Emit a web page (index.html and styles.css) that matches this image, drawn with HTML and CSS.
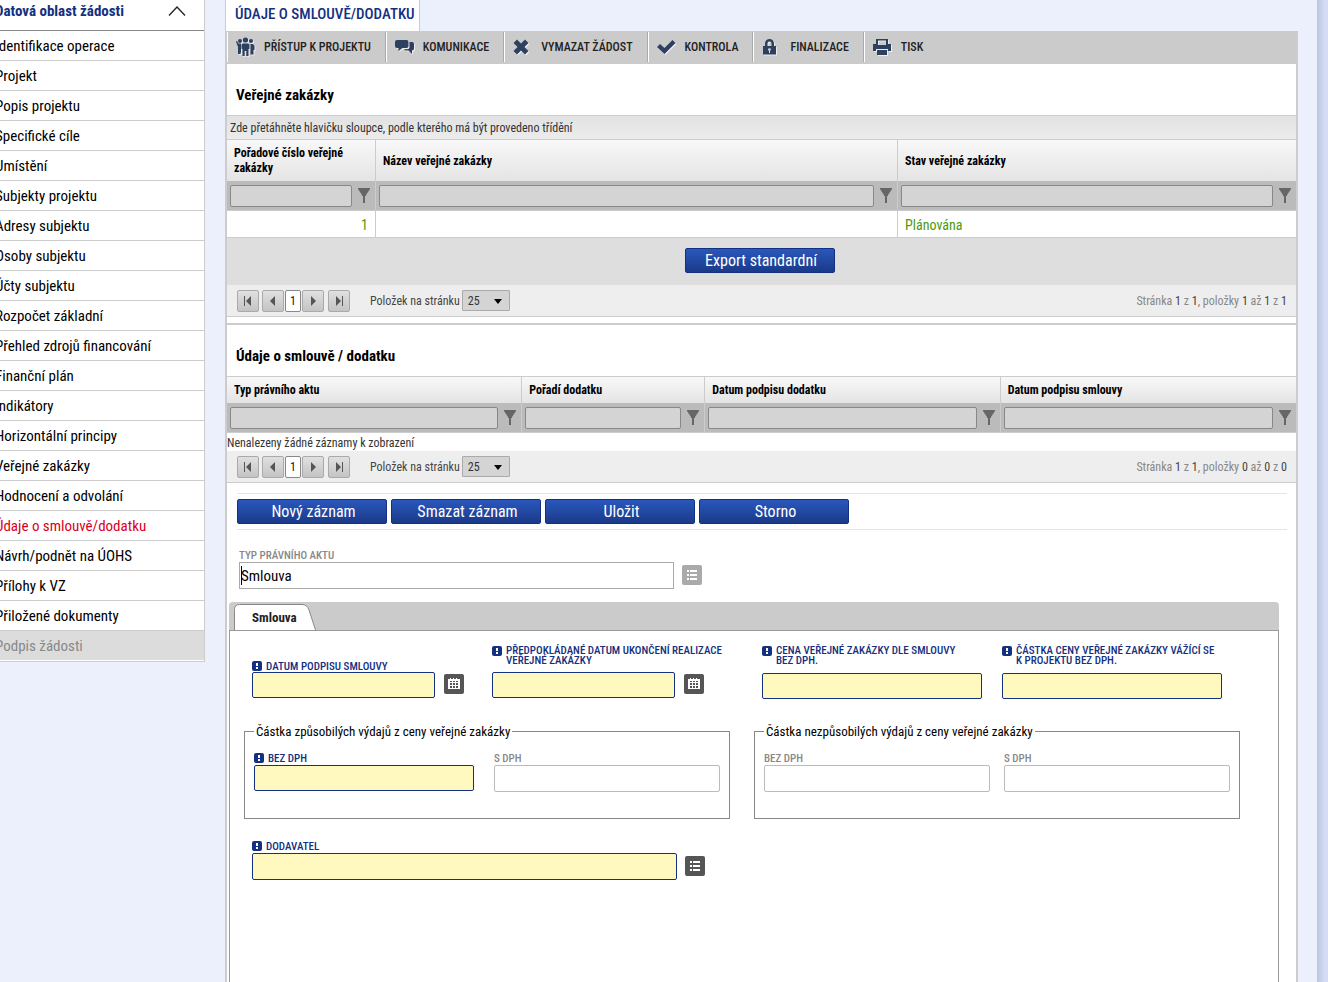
FILE: index.html
```html
<!DOCTYPE html>
<html lang="cs">
<head>
<meta charset="utf-8">
<title>Údaje o smlouvě/dodatku</title>
<link rel="stylesheet" href="styles.css">
</head>
<body>
<svg class="defs" aria-hidden="true">
  <symbol id="funnel" viewBox="0 0 12 15"><path d="M0 0h12v1L8 7v1H7v7H5V8H4V7L0 1z"/></symbol>
  <symbol id="req" viewBox="0 0 10 10"><rect width="10" height="10" rx="2" fill="#143080"/><path d="M4 2h2v3H4zM4 6h2v2H4z" fill="#fff"/></symbol>
  <symbol id="list" viewBox="0 0 20 20"><path d="M5 5h2v2H5zM8 5h7v2H8zM5 9h2v2H5zM8 9h7v2H8zM5 13h2v2H5zM8 13h7v2H8z"/></symbol>
  <symbol id="cal" viewBox="0 0 20 20"><path fill-rule="evenodd" d="M4 5h2V4h1v1h2V4h1v1h2V4h1v1h3v10H4zM6 7v1h2V7zM9 7v1h2V7zM12 7v1h2V7zM6 9v2h2V9zM9 9v2h2V9zM12 9v2h2V9zM6 12v2h2v-2zM9 12v2h2v-2zM12 12v2h2v-2z"/></symbol>
  <symbol id="first" viewBox="0 0 8 10"><path d="M0 0h1v10H0zM7 0v10L2 5z"/></symbol>
  <symbol id="prev" viewBox="0 0 8 10"><path d="M6 0v10L1 5z"/></symbol>
  <symbol id="next" viewBox="0 0 8 10"><path d="M2 0v10l5-5z"/></symbol>
  <symbol id="last" viewBox="0 0 8 10"><path d="M7 0h1v10H7zM1 0v10l5-5z"/></symbol>
</svg>
<div class="page">
  <nav class="side">
    <button class="side-head" type="button">Datová oblast žádosti
      <svg width="18" height="10" viewBox="0 0 18 10"><path d="M1 9.500L9 1l8 8.500" fill="none" stroke="#222" stroke-width="1.300"/></svg>
    </button>
    <ul class="menu">
      <li><a href="#">Identifikace operace</a></li>
      <li><a href="#">Projekt</a></li>
      <li><a href="#">Popis projektu</a></li>
      <li><a href="#">Specifické cíle</a></li>
      <li><a href="#">Umístění</a></li>
      <li><a href="#">Subjekty projektu</a></li>
      <li><a href="#">Adresy subjektu</a></li>
      <li><a href="#">Osoby subjektu</a></li>
      <li><a href="#">Účty subjektu</a></li>
      <li><a href="#">Rozpočet základní</a></li>
      <li><a href="#">Přehled zdrojů financování</a></li>
      <li><a href="#">Finanční plán</a></li>
      <li><a href="#">Indikátory</a></li>
      <li><a href="#">Horizontální principy</a></li>
      <li><a href="#">Veřejné zakázky</a></li>
      <li><a href="#">Hodnocení a odvolání</a></li>
      <li><a href="#" class="active">Údaje o smlouvě/dodatku</a></li>
      <li><a href="#">Návrh/podnět na ÚOHS</a></li>
      <li><a href="#">Přílohy k VZ</a></li>
      <li><a href="#">Přiložené dokumenty</a></li>
      <li><a href="#" class="disabled">Podpis žádosti</a></li>
    </ul>
  </nav>

  <main class="main">
    <div class="title-row"><h1 class="title-tab">ÚDAJE O SMLOUVĚ/DODATKU</h1></div>
    <div class="content">
      <div class="toolbar">
        <button type="button" class="tool"><svg class="tool-icon" width="20" height="20" viewBox="0 0 20 20"><circle cx="9.500" cy="3" r="2.600"/><circle cx="4" cy="4" r="2"/><circle cx="15" cy="4" r="2"/><path d="M7 6.500h5l1.500 1V12h-1v7h-2.200v-5H8.700v5H6.500v-7H5.500V7.500zM0 4.500l1-.5 1.500 2.500H5V15l-.5 2H2V10zM14.500 7H17l1.500 2v4h-1v4.500h-3z"/></svg>PŘÍSTUP K PROJEKTU</button>
        <button type="button" class="tool"><svg class="tool-icon" width="20" height="20" viewBox="0 0 20 20"><path d="M2 3h9.500A2 2 0 0 1 13.500 5v4a2 2 0 0 1-2 2H7.500l-4 3v-3H2A2 2 0 0 1 0 9V5A2 2 0 0 1 2 3zM14.500 5H17a2 2 0 0 1 2 2v4.500a2 2 0 0 1-2 2V17l-3.500-3.500h-3L9 12.200h3.500a2 2 0 0 0 2-2z"/></svg>KOMUNIKACE</button>
        <button type="button" class="tool"><svg class="tool-icon" width="20" height="20" viewBox="0 0 20 20"><path d="M4 2.500L8 6.500l4-4L15.500 6l-4 4 4 4-3.500 3.500-4-4-4 4L.5 14l4-4-4-4z"/></svg>VYMAZAT ŽÁDOST</button>
        <button type="button" class="tool"><svg class="tool-icon" width="20" height="20" viewBox="0 0 20 20"><path d="M0 10l3-3 4.500 4L15.500 3l3 3L7.500 17z"/></svg>KONTROLA</button>
        <button type="button" class="tool"><svg class="tool-icon" width="20" height="20" viewBox="0 0 20 20"><path fill-rule="evenodd" d="M3 9V6.500a4.500 4.500 0 0 1 9 0V9h2v8.500H1V9zM5.500 9h4V6.500a2 2 0 0 0-4 0zM6.200 11.500v2H7V16h1v-2.500h.8v-2z"/></svg>FINALIZACE</button>
        <button type="button" class="tool"><svg class="tool-icon" width="20" height="20" viewBox="0 0 20 20"><path fill-rule="evenodd" d="M3 2h12v5h3v7h-3v-2H3v2H0V7h3zM5 3.500V8h8V3.500zM4 13h10v5H4z"/></svg>TISK</button>
      </div>

      <section class="block">
        <h2>Veřejné zakázky</h2>
        <p class="group-bar">Zde přetáhněte hlavičku sloupce, podle kterého má být provedeno třídění</p>
        <table class="grid">
          <colgroup><col class="c-num"><col><col class="c-state"></colgroup>
          <thead>
            <tr class="tall"><th>Pořadové číslo veřejné zakázky</th><th>Název veřejné zakázky</th><th>Stav veřejné zakázky</th></tr>
            <tr class="filters">
              <td><div class="filter"><input type="text" aria-label="Pořadové číslo veřejné zakázky"><button type="button" aria-label="Filtr"><svg width="12" height="15"><use href="#funnel"/></svg></button></div></td>
              <td><div class="filter"><input type="text" aria-label="Název veřejné zakázky"><button type="button" aria-label="Filtr"><svg width="12" height="15"><use href="#funnel"/></svg></button></div></td>
              <td><div class="filter"><input type="text" aria-label="Stav veřejné zakázky"><button type="button" aria-label="Filtr"><svg width="12" height="15"><use href="#funnel"/></svg></button></div></td>
            </tr>
          </thead>
          <tbody><tr class="data"><td class="num">1</td><td></td><td>Plánována</td></tr></tbody>
        </table>
        <div class="export"><button type="button" class="btn">Export standardní</button></div>
        <div class="pager">
          <button type="button" class="pg" aria-label="První"><svg width="8" height="10"><use href="#first"/></svg></button>
          <button type="button" class="pg" aria-label="Předchozí"><svg width="8" height="10"><use href="#prev"/></svg></button>
          <button type="button" class="pg-current">1</button>
          <button type="button" class="pg" aria-label="Další"><svg width="8" height="10"><use href="#next"/></svg></button>
          <button type="button" class="pg pg-last" aria-label="Poslední"><svg width="8" height="10"><use href="#last"/></svg></button>
          <label class="pg-label" for="size1">Položek na stránku</label>
          <span class="pg-select"><select id="size1"><option>25</option></select><svg width="8" height="5" viewBox="0 0 8 5"><path d="M0 0h8L4 5z"/></svg></span>
          <span class="pg-info">Stránka <b>1</b> z <b>1</b>, položky <b>1</b> až <b>1</b> z <b>1</b></span>
        </div>
      </section>

      <section class="block second">
        <h2>Údaje o smlouvě / dodatku</h2>
        <table class="grid">
          <colgroup><col><col class="c-order"><col><col></colgroup>
          <thead>
            <tr><th>Typ právního aktu</th><th>Pořadí dodatku</th><th>Datum podpisu dodatku</th><th>Datum podpisu smlouvy</th></tr>
            <tr class="filters">
              <td><div class="filter"><input type="text" aria-label="Typ právního aktu"><button type="button" aria-label="Filtr"><svg width="12" height="15"><use href="#funnel"/></svg></button></div></td>
              <td><div class="filter"><input type="text" aria-label="Pořadí dodatku"><button type="button" aria-label="Filtr"><svg width="12" height="15"><use href="#funnel"/></svg></button></div></td>
              <td><div class="filter"><input type="text" aria-label="Datum podpisu dodatku"><button type="button" aria-label="Filtr"><svg width="12" height="15"><use href="#funnel"/></svg></button></div></td>
              <td><div class="filter"><input type="text" aria-label="Datum podpisu smlouvy"><button type="button" aria-label="Filtr"><svg width="12" height="15"><use href="#funnel"/></svg></button></div></td>
            </tr>
          </thead>
        </table>
        <p class="empty">Nenalezeny žádné záznamy k zobrazení</p>
        <div class="pager">
          <button type="button" class="pg" aria-label="První"><svg width="8" height="10"><use href="#first"/></svg></button>
          <button type="button" class="pg" aria-label="Předchozí"><svg width="8" height="10"><use href="#prev"/></svg></button>
          <button type="button" class="pg-current">1</button>
          <button type="button" class="pg" aria-label="Další"><svg width="8" height="10"><use href="#next"/></svg></button>
          <button type="button" class="pg pg-last" aria-label="Poslední"><svg width="8" height="10"><use href="#last"/></svg></button>
          <label class="pg-label" for="size2">Položek na stránku</label>
          <span class="pg-select"><select id="size2"><option>25</option></select><svg width="8" height="5" viewBox="0 0 8 5"><path d="M0 0h8L4 5z"/></svg></span>
          <span class="pg-info">Stránka <b>1</b> z <b>1</b>, položky <b>0</b> až <b>0</b> z <b>0</b></span>
        </div>
      </section>

      <div class="actions">
        <button type="button" class="btn">Nový záznam</button>
        <button type="button" class="btn">Smazat záznam</button>
        <button type="button" class="btn">Uložit</button>
        <button type="button" class="btn">Storno</button>
      </div>

      <div class="type-field">
        <label class="lbl grey" for="typ">TYP PRÁVNÍHO AKTU</label>
        <div class="with-btn">
          <span class="caret-box"><input class="inp dark" id="typ" type="text" value="Smlouva"><i class="caret"></i></span>
          <button type="button" class="ico light" aria-label="Vybrat"><svg width="20" height="20"><use href="#list"/></svg></button>
        </div>
      </div>

      <div class="tabs">
        <div class="tab-strip">
          <button type="button" class="tab">
            <svg class="tab-shape" width="84" height="26" viewBox="0 0 84 26"><path d="M.5 26V5.500Q.5.500 5.500.500H68Q73 .500 75 6L81.500 26" fill="#fff" stroke="#888"/></svg>
            <span>Smlouva</span>
          </button>
        </div>
        <div class="panel">
          <div class="row">
            <div class="field">
              <label class="lbl" for="f1"><svg width="10" height="10"><use href="#req"/></svg>DATUM PODPISU SMLOUVY</label>
              <div class="with-btn"><input class="inp need date" id="f1" type="text"><button type="button" class="ico" aria-label="Kalendář"><svg width="20" height="20"><use href="#cal"/></svg></button></div>
            </div>
            <div class="field">
              <label class="lbl two" for="f2"><svg width="10" height="10"><use href="#req"/></svg><span>PŘEDPOKLÁDANÉ DATUM UKONČENÍ REALIZACE<br>VEŘEJNÉ ZAKÁZKY</span></label>
              <div class="with-btn"><input class="inp need date" id="f2" type="text"><button type="button" class="ico" aria-label="Kalendář"><svg width="20" height="20"><use href="#cal"/></svg></button></div>
            </div>
            <div class="field">
              <label class="lbl two" for="f3"><svg width="10" height="10"><use href="#req"/></svg><span>CENA VEŘEJNÉ ZAKÁZKY DLE SMLOUVY<br>BEZ DPH.</span></label>
              <input class="inp need money" id="f3" type="text">
            </div>
            <div class="field">
              <label class="lbl two" for="f4"><svg width="10" height="10"><use href="#req"/></svg><span>ČÁSTKA CENY VEŘEJNÉ ZAKÁZKY VÁŽÍCÍ SE<br>K PROJEKTU BEZ DPH.</span></label>
              <input class="inp need money" id="f4" type="text">
            </div>
          </div>
          <div class="sets">
            <fieldset>
              <legend>Částka způsobilých výdajů z ceny veřejné zakázky</legend>
              <div class="field"><label class="lbl" for="a1"><svg width="10" height="10"><use href="#req"/></svg>BEZ DPH</label><input class="inp need money" id="a1" type="text"></div>
              <div class="field"><label class="lbl grey" for="a2">S DPH</label><input class="inp calc" id="a2" type="text"></div>
            </fieldset>
            <fieldset>
              <legend>Částka nezpůsobilých výdajů z ceny veřejné zakázky</legend>
              <div class="field"><label class="lbl grey" for="b1">BEZ DPH</label><input class="inp calc" id="b1" type="text"></div>
              <div class="field"><label class="lbl grey" for="b2">S DPH</label><input class="inp calc" id="b2" type="text"></div>
            </fieldset>
          </div>
          <div class="field supplier">
            <label class="lbl" for="dod"><svg width="10" height="10"><use href="#req"/></svg>DODAVATEL</label>
            <div class="with-btn"><input class="inp need wide" id="dod" type="text"><button type="button" class="ico" aria-label="Vybrat"><svg width="20" height="20"><use href="#list"/></svg></button></div>
          </div>
        </div>
      </div>
    </div>
  </main>
  <div class="edge"></div>
</div>
</body>
</html>
```
FILE: styles.css
```css
* { box-sizing: border-box; }
body { margin: 0; background: #ecf0fc; color: #000; font-family: "Roboto Condensed", "Liberation Sans Narrow", Roboto, sans-serif; font-size: 12px; overflow-x: hidden; }
button, input, select { font: inherit; margin: 0; border-radius: 0; }
button { cursor: pointer; padding: 0; border: 0; background: none; }
h1, h2, p, ul { margin: 0; padding: 0; }
svg { display: block; flex: none; }
.defs { position: absolute; width: 0; height: 0; }
.page { display: flex; align-items: stretch; min-height: 100vh; overflow: hidden; }

.side { flex: none; align-self: flex-start; width: 215px; margin: 0 20px 0 -10px; background: #fff; border-right: 1px solid #ccc; border-bottom: 1px solid #ccc; }
.side-head { display: flex; align-items: center; justify-content: space-between; width: 100%; height: 31px; padding: 0 18px 8px 5px; border-bottom: 1px solid #888; color: #143080; font-size: 15px; font-weight: bold; text-align: left; }
.menu { list-style: none; }
.menu a { display: block; height: 30px; line-height: 31px; padding-left: 5px; border-bottom: 1px solid #ccc; color: #000; font-size: 15px; text-decoration: none; }
.menu .active { color: #d8001d; }
.menu .disabled { background: #dcdcdc; border-color: #fff; color: #888; }

.main { flex: 1; min-width: 0; display: flex; flex-direction: column; }
.title-row { display: flex; height: 31px; }
.title-tab { height: 31px; padding: 0 4px 0 9px; line-height: 28px; background: #fff; border: solid #ccc; border-width: 0 1px; color: #143080; font-size: 15px; font-weight: 500; }
.content { flex: 1; background: #fff; border: solid #ccc; border-width: 0 2px; }
.toolbar { display: flex; background: #cbcbcb; height: 33px; padding-bottom: 1px; }
.tool { display: flex; align-items: center; gap: 8px; padding: 0 14px 0 8px; border-left: 1px solid #fff; border-right: 1px solid #aaa; margin: 1px 0; color: #222; font-size: 12px; font-weight: 500; }
.tool:last-child { border-right: 0; }
.tool-icon { fill: #2d4060; filter: drop-shadow(1px 1px 0 #eee); }

h2 { height: 51px; line-height: 62px; padding-left: 9px; font-size: 15px; font-weight: bold; }
.group-bar { height: 24px; line-height: 24px; padding-left: 3px; color: #333; border-top: 1px solid #ccc; background: linear-gradient(#e2e2e2, #ececec); }
.grid { width: 100%; table-layout: fixed; border-collapse: separate; border-spacing: 0; }
.c-num { width: 149px; }
.c-state { width: 398px; }
.c-order { width: 183px; }
.grid th { height: 27px; padding: 1px 24px 0 7px; text-align: left; font-weight: bold; line-height: 15px; border: solid #ccc; border-width: 1px 1px 0 0; background: linear-gradient(#f8f8f8, #e4e4e4); }
.grid .tall th { height: 42px; }
.grid td { border-right: 1px solid #ccc; padding: 0; }
.grid th:last-child, .grid td:last-child { border-right: 0; }
.filters td { height: 30px; background: #bbb; border-bottom: 1px solid #ccc; }
.filter { display: flex; align-items: center; height: 28px; padding-left: 3px; }
.filter input { flex: 1; min-width: 0; height: 22px; border: 1px solid #888; border-radius: 2px; background: #d4d4d4; }
.filter button { padding: 0 5px 0 6px; }
.filter svg { fill: #666; }
.data td { height: 27px; border-bottom: 1px solid #ccc; padding: 1px 7px 0; color: #4c9a0c; font-size: 14px; }
.data .num { text-align: right; }
.export { display: flex; justify-content: center; padding: 10px 4px 12px 0; background: #dedede; }
.btn { height: 25px; width: 150px; padding: 1px 0 0 3px; border: 1px solid #143080; border-radius: 2px; background: linear-gradient(#2a57bd, #1a3a88); color: #fff; font-size: 16px; line-height: 22px; }
.pager { display: flex; align-items: center; height: 32px; padding: 0 9px 0 10px; background: #eee; border-bottom: 1px solid #ccc; color: #444; }
.pg { display: flex; align-items: center; justify-content: center; width: 22px; height: 22px; margin-right: 3px; border: 1px solid #aaa; border-radius: 2px; background: linear-gradient(#e0e0e0, #c4c4c4); }
.pg svg { fill: #555; }
.pg-current { width: 16px; height: 22px; margin: 0 1px 0 -2px; border: 1px solid #888; border-radius: 2px; background: #fff; color: #222; }
.pg-last { margin: 0 20px 0 1px; }
.pg-label { margin-right: 2px; }
.pg-select { position: relative; }
.pg-select select { appearance: none; display: block; width: 48px; height: 21px; padding: 0 5px; border: 1px solid #aaa; border-radius: 1px; background: #d4d4d4; color: #333; }
.pg-select svg { position: absolute; right: 8px; top: 9px; pointer-events: none; }
.pg-info { margin-left: auto; color: #888; }
.pg-info b { color: #444; font-weight: normal; }
.second { margin-top: 6px; border-top: 2px solid #ccc; }
.empty { height: 18px; line-height: 20px; color: #333; }

.actions { display: flex; gap: 4px; margin: 10px 9px 0 10px; padding: 5px 0; border: solid #e4e4e4; border-width: 1px 0; }
.type-field { padding: 19px 0 13px 12px; }
.lbl { display: flex; gap: 4px; height: 13px; color: #143080; font-size: 11px; font-weight: 500; line-height: 14px; }
.lbl svg { margin-top: 1px; }
.lbl.two { height: 26px; line-height: 10px; }
.lbl.two svg { margin-top: 0; }
.grey { color: #888; }
.inp { display: block; height: 26px; border: 1px solid #bbb; border-radius: 2px; background: #fff; padding: 0 2px; font-size: 14px; }
.with-btn { display: flex; align-items: flex-start; gap: 8px; }
.ico { width: 20px; height: 20px; margin-top: 3px; border-radius: 2px; background: #555; fill: #fff; }
.ico.light { background: #aaa; }
.row .with-btn { gap: 9px; }
.row .ico { margin-top: 2px; }
.dark { width: 435px; height: 27px; border-color: #aaa; border-radius: 0; padding: 0 1px; font-size: 15px; }
.caret-box { position: relative; }
.caret { position: absolute; left: 2px; top: 4px; width: 1px; height: 19px; background: #000; }
.need { border-color: #143080; background: #fff9c0; }
.date { width: 183px; }
.money { width: 220px; }
.calc { width: 226px; height: 27px; }
.wide { width: 425px; height: 27px; }

.tabs { margin: 0 17px 0 2px; }
.tab-strip { height: 28px; padding: 2px 0 0 5px; background: #cbcbcb; border-radius: 4px 4px 0 0; }
.tab { position: relative; display: block; width: 84px; height: 27px; color: #222; font-size: 13px; font-weight: bold; text-align: left; padding-left: 18px; }
.tab span { position: relative; }
.tab-shape { position: absolute; left: 0; top: 0; }
.panel { min-height: 356px; border: 1px solid #999; border-bottom: 0; padding: 15px 22px 0; }
.row { display: grid; grid-template-columns: 240px 270px 240px 1fr; }
.row .lbl:not(.two) { margin-top: 14px; height: 12px; }
.row .two + .inp { margin-top: 1px; }
.sets { display: flex; gap: 24px; margin: 24px 0 0 -8px; }
fieldset { display: grid; grid-template-columns: 240px 1fr; align-content: start; min-width: 0; width: 486px; height: 96px; margin: 0; padding: 12px 9px 0; border: 1px solid #888; }
legend { padding: 0 2px; font-size: 13px; line-height: 17px; }
.supplier { margin-top: 21px; }
.edge { flex: none; width: 11px; margin-left: 19px; background: linear-gradient(90deg, #bcc6e2, #d5ddf5 8px); }
```
